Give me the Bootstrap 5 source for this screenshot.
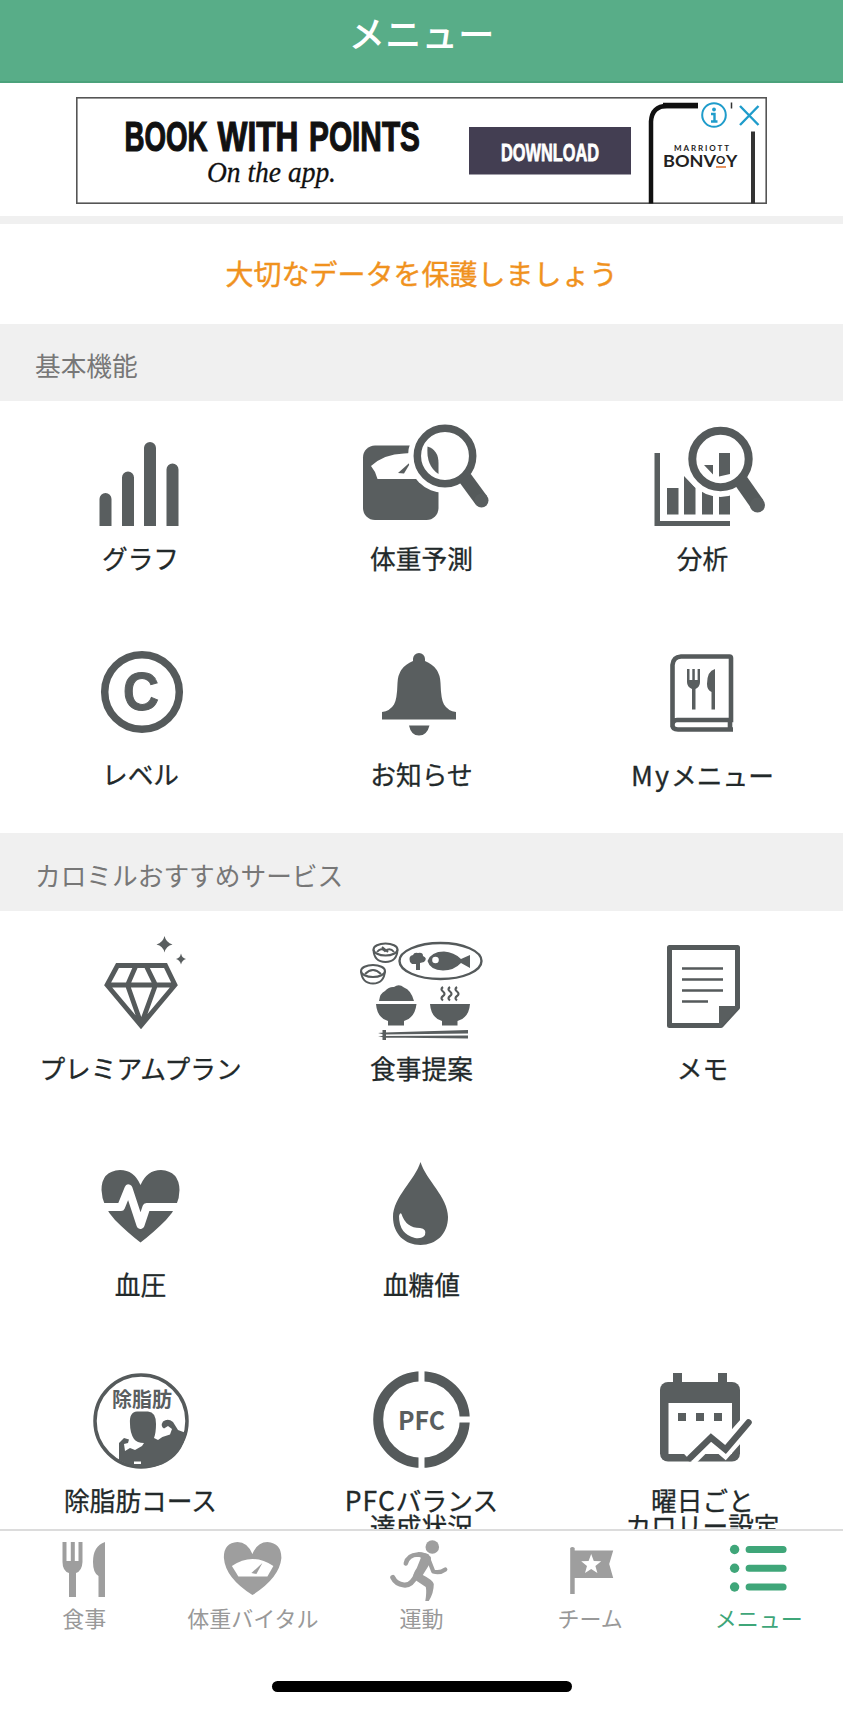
<!DOCTYPE html>
<html lang="ja">
<head>
<meta charset="utf-8">
<meta name="viewport" content="width=device-width, initial-scale=1">
<title>メニュー</title>
<link href="https://cdn.jsdelivr.net/npm/bootstrap@5.3.0/dist/css/bootstrap.min.css" rel="stylesheet">
<style>
body{font-family:"Noto Sans CJK JP",sans-serif;background:#fff;color:#22292a}
.screen{height:1709px}
.topbar{height:82.5px;background:#58ad88;border-bottom:2px solid #4ba27b;padding-bottom:15px}
.topbar h1{font-size:36.5px;line-height:40px;font-weight:500}
.promo{height:141px;padding-top:14px;border-bottom:8px solid #f0f0f0}
.notice{height:100px;font-size:28px;color:#f0921e;padding-bottom:2px;-webkit-text-stroke:.4px #f0921e}
.sect{height:77.5px;background:#f0f0f0;color:#777;font-size:25.7px;padding:7px 0 0 35px;font-weight:400}
.tile{height:216px;text-decoration:none;color:inherit}
.tile .cap{font-size:25.7px;line-height:25px;margin-top:5px;-webkit-text-stroke:.3px #22292a}
.wide-my{font-size:27px;letter-spacing:2px;line-height:1}
.wide-pfc{font-size:26.5px;letter-spacing:1px;line-height:1}
.tile svg,.tabitem svg{fill:#595e5f}
svg{display:block}
.ln{fill:none!important;stroke:#555a5b}
.tabs{height:180px;border-top:2px solid #dcdcdc;background:#fff}
.tabitem{color:#999;font-size:22px;line-height:24px;text-decoration:none;flex:1 1 0}
.tabitem svg{fill:#9e9e9e}
.tabitem.on{color:#3fa679}
.tabitem.on svg{fill:#3fa679}
.homebar{width:300px;height:11px;background:#000;margin-top:52px}
</style>
</head>
<body>
<div class="screen d-flex flex-column overflow-hidden">
<header class="topbar d-flex align-items-center justify-content-center text-white flex-shrink-0"><h1 class="m-0">メニュー</h1></header>
<main class="flex-grow-1 overflow-hidden" style="min-height:0">
<div class="promo d-flex justify-content-center">
<svg width="691" height="107" viewBox="76 96.5 691 107">
<rect x="76.8" y="97.3" width="689.4" height="105.4" fill="#fff" stroke="#555" stroke-width="1.6"/>
<rect x="469" y="126.5" width="162" height="47.5" fill="#433e52"/>
<g font-family="Liberation Sans Narrow,Liberation Sans" font-weight="700">
<g fill="#111" stroke="#111" stroke-width="1.2"><text x="124.500" y="150" font-size="42" textLength="83" lengthAdjust="spacingAndGlyphs">BOOK</text>
<text x="217.500" y="150" font-size="42" textLength="81" lengthAdjust="spacingAndGlyphs">WITH</text>
<text x="309" y="150" font-size="42" textLength="111" lengthAdjust="spacingAndGlyphs">POINTS</text></g>
<text x="501" y="160" font-size="24" fill="#fff" stroke="#fff" stroke-width=".8" textLength="98" lengthAdjust="spacingAndGlyphs">DOWNLOAD</text>
</g>
<text x="207" y="181" font-family="Liberation Serif" font-style="italic" font-size="30" fill="#111" stroke="#111" stroke-width=".3" textLength="129" lengthAdjust="spacingAndGlyphs">On the app.</text>
<path d="M651 203V121Q652 105.500 667 105.500H698" fill="none" stroke="#111" stroke-width="4.500"/><path d="M663 105H698" stroke="#111" stroke-width="5.500"/>
<path d="M753 131V203" stroke="#333" stroke-width="4"/><path d="M731.500 102V108" stroke="#333" stroke-width="1.500"/>
<g font-family="Lato,sans-serif" fill="#222"><text x="674" y="150.500" font-size="8" font-weight="700" textLength="55">MARRIOTT</text>
<text x="663" y="166.500" font-size="17.500" font-weight="700" textLength="53" lengthAdjust="spacingAndGlyphs">BONV</text><text x="726" y="166.500" font-size="17.500" font-weight="700">Y</text><text x="716" y="163" font-size="11.500" font-weight="700">O</text></g>
<path d="M716 166.500h10" stroke="#e8935e" stroke-width="2"/>
<circle cx="714" cy="114.500" r="11.800" fill="#fff" stroke="#1f9ccb" stroke-width="2"/><circle cx="714" cy="109" r="1.900" fill="#1f9ccb"/><path d="M711 113.500h3.500v7.500M711 121h6.500" fill="none" stroke="#1f9ccb" stroke-width="2.400"/>
<path d="M740 105.500L758.500 124.500M758.500 105.500L740 124.500" stroke="#1f9ccb" stroke-width="2.400"/>
</svg>
</div>
<div class="notice d-flex align-items-center justify-content-center">大切なデータを保護しましょう</div>
<h2 class="sect d-flex align-items-center m-0">基本機能</h2>
<div class="row g-0 text-center">
<a class="tile col-4"><svg width="281" height="139" viewBox="0 401 281 139"><path d="M99.500 526V499a6 6 0 0 1 12 0V526zM122 526V477.500a6 6 0 0 1 12 0V526zM144 526V448a6 6 0 0 1 12 0V526zM166.500 526V469.500a6 6 0 0 1 12 0V526z"/></svg><div class="cap">グラフ</div></a>
<a class="tile col-4"><svg width="281" height="139" viewBox="281 401 281 139"><rect x="363" y="445.500" width="75.500" height="74.500" rx="12"/><path d="M371 466Q384 454 404 453.500L411 453 418 479H377.500L375 472Z" fill="#fff"/><path d="M398 473L411.500 461 404 473.500Z"/><circle cx="445" cy="456" r="37" fill="#fff"/><path d="M427.500 446.500Q438.500 450 438.500 463V474Q426 466 427.500 446.500Z"/><circle cx="445" cy="456" r="27.700" class="ln" stroke-width="7.500"/><path d="M465 478L481.500 500.500" class="ln" stroke-width="14"/><circle cx="481.500" cy="500.500" r="7"/></svg><div class="cap">体重予測</div></a>
<a class="tile col-4"><svg width="281" height="139" viewBox="562 401 281 139"><path d="M654.500 453H660V521H730V526H654.500ZM667 488H678.500V514.500H667ZM684 476L695.500 488V514.500H684ZM702 488H713V514.500H702ZM719 488H730V514.500H719Z"/><circle cx="720.500" cy="459" r="38" fill="#fff"/><path d="M704 465H713V474.500ZM719 453H730V474L719 476.500Z"/><circle cx="720.500" cy="459" r="28.200" class="ln" stroke-width="8"/><path d="M741 481L757.500 504.500" class="ln" stroke-width="14.500"/><circle cx="757.500" cy="505" r="7.500"/></svg><div class="cap">分析</div></a>
<a class="tile col-4"><svg width="281" height="139" viewBox="0 617 281 139"><circle cx="142" cy="692" r="37.300" class="ln" stroke-width="7.500"/><text x="141" y="710" text-anchor="middle" font-family="Liberation Sans" font-weight="700" font-size="53" stroke="#595e5f" textLength="36" lengthAdjust="spacingAndGlyphs">C</text></svg><div class="cap">レベル</div></a>
<a class="tile col-4"><svg width="281" height="139" viewBox="281 617 281 139"><path d="M413 661V659a6 6 0 0 1 12 0V661Q440 667 440.500 683Q441 700 444 704.500Q448 711 456 712V719.500H382V712Q390 711 394 704.500Q397 700 397.500 683Q398 667 413 661ZM409 725.500H429.500Q427 735.500 419 735.500Q411 735.500 409 725.500Z"/></svg><div class="cap">お知らせ</div></a>
<a class="tile col-4"><svg width="281" height="139" viewBox="562 617 281 139"><path d="M672.500 727V665Q673 657 681 656.500H729.500Q731 656.500 731 658V720H677Q672.500 720 672.500 725Q672.500 729.500 678 729.500H733M730 720V730" class="ln" stroke-width="4.600"/><path d="M687 669h2.500v11h2.800v-11h2.500v11h2.800v-11H700V682Q700 687 695.500 689V709.500H692V689Q687 687 687 682ZM715 669V709.500H711.500V692Q707 690 707 684Q707 671 715 669Z"/></svg><div class="cap"><span class="wide-my">My</span>メニュー</div></a>
</div>
<h2 class="sect d-flex align-items-center m-0">カロミルおすすめサービス</h2>
<div class="row g-0 text-center">
<a class="tile col-4"><svg width="281" height="139" viewBox="0 911 281 139"><path d="M117.500 965.500H165.500L175 985 141 1025.500 107 985ZM107 985H175M136 965.500L127.500 985 140.500 1022M146 965.500L155.500 985 142 1022" class="ln" stroke-width="4.800"/><path d="M164.500 936Q166 942.500 172.500 944.500Q166 946 164.500 952.500Q163 946 156.500 944.500Q163 942.500 164.500 936ZM181 953.500Q182 958 186 959Q182 960 181 964.500Q180 960 176 959Q180 958 181 953.500Z"/></svg><div class="cap">プレミアムプラン</div></a>
<a class="tile col-4"><svg width="281" height="139" viewBox="281 911 281 139"><g class="ln" stroke-width="2"><ellipse cx="385.500" cy="949.500" rx="12" ry="6"/><path d="M373.500 949.500Q374 962 385.500 962Q397 962 397.500 949.500M377 952q4-5 8-1q5-4 9 1M382 947l6 5"/><ellipse cx="373" cy="971" rx="12" ry="6"/><path d="M361 971Q362 983.500 373 983.500Q384 983.500 385 971M365 974q8-8 16 0"/><ellipse cx="440.500" cy="961" rx="41" ry="18" stroke-width="2.400"/><path d="M443 987q-3 2 0 4.500t0 4.500 0 4.500M450 987q-3 2 0 4.500t0 4.500 0 4.500M457 987q-3 2 0 4.500t0 4.500 0 4.500" stroke-width="2.200"/></g><path d="M410 962Q408 956 413 955Q414 952 418 953Q423 952 423 956Q428 958 424 962L420 963V970H416V964L412 964Z"/><path d="M427.500 961Q431 951.500 444 951.500Q454 952 461 959L470 955V968L461 963Q454 970.500 443 970.500Q430 970 427.500 961Z"/><circle cx="435.500" cy="960" r="3.300" fill="#fff"/><path d="M379 1001Q380 993 385 991Q389 986.500 394 987Q399 983.500 404 987.500Q411 990 414 1001ZM376 1004H416.500Q415 1018 404 1021V1025.500H388V1021Q377 1018 376 1004ZM430 1004H470Q469 1018 457.500 1021V1025.500H442V1021Q431 1018 430 1004ZM378 1033L384 1032.500 468 1030V1033.500L384 1034.500ZM378 1036L468 1035.500V1038.500L384 1037.500ZM382.500 1030h3.500v10h-3.500z"/></svg><div class="cap">食事提案</div></a>
<a class="tile col-4"><svg width="281" height="139" viewBox="562 911 281 139"><path d="M669.500 947.500H737.500V1007.500L721 1025.500H669.500Z" class="ln" stroke-width="5" stroke-linejoin="round"/><path d="M719 1006H739.500L721 1027H719Z"/><path d="M682 968.500H723M682 979.500H723M682 990.500H723M682 1001.500H708" class="ln" stroke-width="2.600"/></svg><div class="cap">メモ</div></a>
<a class="tile col-4"><svg width="281" height="139" viewBox="0 1127 281 139"><path d="M140.500 1185Q134 1170 120 1170Q101.500 1171 101.500 1190Q102 1206 115 1220Q128 1233 140.500 1242.500Q153 1233 166 1220Q179.500 1206 179.500 1190Q179 1171 161 1170Q147 1170 140.500 1185Z"/><path d="M98 1207H121L128.500 1188.500 140.500 1225 146.500 1207H184" fill="none" stroke="#fff" stroke-width="8" stroke-linejoin="round"/></svg><div class="cap">血圧</div></a>
<a class="tile col-4"><svg width="281" height="139" viewBox="281 1127 281 139"><path d="M420.500 1162C426 1180 448 1197 448 1217C448 1234 436 1245 420.500 1245C405 1245 393 1234 393 1217C393 1197 415 1180 420.500 1162Z"/><path d="M401.500 1214Q406 1228 420 1228Q427 1229 425 1235Q422 1239 415 1238Q399 1234 399 1216Q400 1212 401.500 1214Z" fill="#fff"/></svg><div class="cap">血糖値</div></a>
<div class="tile col-4"></div>
<a class="tile col-4"><svg width="281" height="139" viewBox="0 1343 281 139"><circle cx="141" cy="1421" r="46" class="ln" stroke-width="3.500"/><text x="142" y="1407" text-anchor="middle" font-size="20" font-weight="700">除脂肪</text><path d="M130 1424Q129 1412 137 1411.500H148Q156 1412 156 1424Q156 1433 154 1438L158 1440Q163 1436 170 1434.500L172 1429 168 1426 164 1428.500Q160 1426 163 1421.500Q168 1418 173 1422L178 1430 186 1433Q183 1455 162 1464.500Q140 1472 119 1460V1443L124 1438 129 1439.500 128 1443 124 1444 125 1451 130 1448 135 1450 142 1446 144 1443Q137 1443 134 1439Q130 1433 130 1424Z"/><path d="M134 1461.500h7v2.500h-7z" fill="#fff"/></svg><div class="cap">除脂肪コース</div></a>
<a class="tile col-4"><svg width="281" height="139" viewBox="281 1343 281 139"><circle cx="421.500" cy="1419.500" r="43.300" class="ln" stroke-width="10"/><path d="M421.500 1368V1385M421.500 1454V1471M458 1419.500H472" stroke="#fff" stroke-width="6"/><text x="398" y="1430" font-size="25.500" font-weight="700" textLength="47" lengthAdjust="spacingAndGlyphs">PFC</text></svg><div class="cap"><span class="wide-pfc">PFC</span>バランス<br>達成状況</div></a>
<a class="tile col-4"><svg width="281" height="139" viewBox="562 1343 281 139"><path d="M673 1373H682V1384H673ZM718 1373H727V1384H718Z"/><rect x="660" y="1382" width="80" height="79.500" rx="8"/><path d="M668.500 1403H732V1454H668.500Z" fill="#fff"/><path d="M678 1413h8v8h-8zM696 1413h8v8h-8zM714 1413h8v8h-8z"/><path d="M689 1459L711 1437 725 1449 749 1422" fill="none" stroke="#fff" stroke-width="16"/><path d="M690 1458L711 1437.500 725.500 1449.500 748.500 1422.500" class="ln" stroke-width="6.500" stroke-linecap="round"/></svg><div class="cap">曜日ごと<br>カロリー設定</div></a>
</div>
</main>
<nav class="tabs flex-shrink-0 text-center">
<div class="d-flex">
<a class="tabitem"><svg class="w-100" height="74" viewBox="0 1531 168.600 74"><path d="M62.500 1542h4v19h4.300v-19h4v19h3.700v-19h4V1562Q82 1571 76 1573V1597H69V1573Q62.500 1571 62.500 1562ZM105 1542V1597H98.500V1576Q93 1573 93 1562Q93 1546 105 1542Z"/></svg>食事</a>
<a class="tabitem"><svg class="w-100" height="74" viewBox="168.600 1531 168.600 74"><path d="M252 1554Q247 1542 237 1542Q223 1543 223.500 1558Q225 1578 252 1595Q279 1578 281 1558Q281 1543 267 1542Q257 1542 252 1554Z"/><path d="M231.500 1566Q252 1552 273 1566L267 1576.500H238Z" fill="#fff"/><path d="M251 1573L262 1563 256 1574Z"/></svg>体重バイタル</a>
<a class="tabitem"><svg class="w-100" height="74" viewBox="337.200 1531 168.600 74"><circle cx="432.500" cy="1547" r="6.800"/><path d="M418 1552Q427 1552 431 1557Q432 1561 428 1567L423 1575Q433 1580 434 1584Q434 1593 429 1601H425.500Q427 1592 426 1587L414 1579Q412 1575 417 1568L421 1558Z"/><g fill="none" stroke="#9e9e9e" stroke-linecap="round" stroke-linejoin="round"><path d="M406 1563.500Q408 1555 418 1554.500L427 1556" stroke-width="4.500"/><path d="M429 1560L433.500 1571.500Q440 1573.500 445.500 1569.500" stroke-width="4.200"/><path d="M417 1574Q412 1586 404 1585Q396 1584 393 1577.500" stroke-width="5.200"/></g></svg>運動</a>
<a class="tabitem"><svg class="w-100" height="74" viewBox="505.800 1531 168.600 74"><path d="M570 1548q2-2 4.500 0V1550.500H613L609 1564 613 1578H574.500V1594H570Z"/><path d="M591 1554l2.600 7 7.400.3-5.800 4.600 2 7.100-6.200-4.100-6.200 4.100 2-7.100-5.800-4.600 7.400-.3z" fill="#fff"/></svg>チーム</a>
<a class="tabitem on"><svg class="w-100" height="74" viewBox="674.400 1531 168.600 74"><circle cx="735" cy="1549.500" r="4.700"/><circle cx="735" cy="1568.300" r="4.700"/><circle cx="735" cy="1587" r="4.700"/><path d="M749.500 1549.500H783.500M749.500 1568.300H783.500M749.500 1587H783.500" stroke="#3fa679" stroke-width="7" stroke-linecap="round"/></svg>メニュー</a>
</div>
<div class="homebar rounded-pill mx-auto"></div>
</nav>
</div>
<script src="https://cdn.jsdelivr.net/npm/bootstrap@5.3.0/dist/js/bootstrap.bundle.min.js"></script>
</body>
</html>
